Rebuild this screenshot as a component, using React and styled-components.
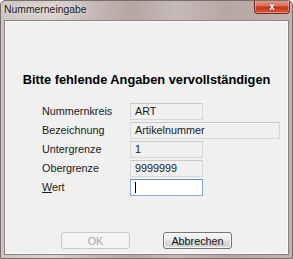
import React from 'react';
import styled, { createGlobalStyle } from 'styled-components';

const Global = createGlobalStyle`
	html, body {
		margin: 0;
		padding: 0;
		background: #ffffff;
	}
	* {
		box-sizing: border-box;
	}
`;

const Window = styled.div`
	width: 293px;
	height: 259px;
	display: flex;
	flex-direction: column;
	padding: 0 3px 3px 3px;
	border: 1px solid #7a6e6c;
	border-radius: 5px 5px 0 0;
	background: linear-gradient(
		90deg,
		#cdc5c3 0%,
		#d8d2d1 18%,
		#c4b8b5 32%,
		#b5a6a2 45%,
		#c6bab7 60%,
		#b7a7a3 78%,
		#c0b2ae 100%
	);
	font-family: 'Liberation Sans', Arial, sans-serif;
	overflow: hidden;
`;

const TitleBar = styled.div`
	height: 19px;
	display: flex;
	justify-content: space-between;
	align-items: flex-start;
`;

const Title = styled.div`
	font-size: 10.4px;
	line-height: 17px;
	color: #1e1a1a;
	text-shadow: 0 0 6px rgba(255, 255, 255, 0.9);
`;

const CloseButton = styled.div`
	width: 36px;
	height: 14px;
	margin-top: -1px;
	margin-right: -1px;
	display: flex;
	align-items: center;
	justify-content: center;
	border: 1px solid #6c2a22;
	border-top: none;
	border-radius: 0 0 4px 4px;
	background: linear-gradient(180deg, #e7a191 0%, #d86a52 45%, #c4341a 55%, #d65a3c 100%);
	box-shadow: inset 0 0 0 1px rgba(255, 200, 190, 0.5);
	color: #ffffff;
	font-size: 10px;
	font-weight: bold;
	line-height: 12px;
	text-shadow: 0 0 2px #5a1a10;
`;

const Client = styled.div`
	flex: 1;
	display: flex;
	flex-direction: column;
	background: #f0f0f0;
	border: 1px solid #8c807e;
	box-shadow: inset 0 0 0 1px #fbfbfb;
`;

const Heading = styled.div`
	margin-top: 51px;
	text-align: center;
	font-size: 12.8px;
	font-weight: bold;
	line-height: 16px;
	color: #000000;
`;

const Form = styled.div`
	margin-top: 15px;
	padding-left: 37px;
	display: grid;
	grid-template-columns: 88px auto;
	grid-auto-rows: 17px;
	row-gap: 2px;
	align-items: center;
`;

const Label = styled.div`
	font-size: 10.8px;
	color: #1a1a1a;
	line-height: 17px;

	u {
		text-decoration: underline;
	}
`;

const Field = styled.div`
	width: ${(p) => p.$width}px;
	height: 17px;
	padding-left: 4px;
	font-size: 10.8px;
	line-height: 15px;
	color: #1a1a1a;
	background: ${(p) => (p.$editable ? '#ffffff' : '#f0f0f0')};
	border: 1px solid ${(p) => (p.$editable ? '#7fa9d6' : '#d8d8d8')};
	border-top-color: ${(p) => (p.$editable ? '#5d8fc4' : '#c9c9c9')};
	display: flex;
	align-items: center;
`;

const Caret = styled.span`
	display: block;
	width: 1px;
	height: 11px;
	background: #000000;
`;

const ButtonRow = styled.div`
	margin-top: 36px;
	display: flex;
	justify-content: center;
	gap: 33px;
`;

const Button = styled.div`
	width: 69px;
	height: 17px;
	display: flex;
	align-items: center;
	justify-content: center;
	font-size: 10.8px;
	border-radius: 3px;
	color: ${(p) => (p.$disabled ? '#a3a3a3' : '#111111')};
	border: 1px solid ${(p) => (p.$disabled ? '#c6c8ca' : '#747474')};
	background: ${(p) =>
		p.$disabled
			? '#f4f4f4'
			: 'linear-gradient(180deg, #f4f4f4 0%, #ececec 48%, #dcdcdc 52%, #d2d2d2 100%)'};
	box-shadow: ${(p) => (p.$disabled ? 'none' : 'inset 0 0 0 1px #fafafa')};
`;

const rows = [
	{ label: 'Nummernkreis', value: 'ART', width: 73 },
	{ label: 'Bezeichnung', value: 'Artikelnummer', width: 150 },
	{ label: 'Untergrenze', value: '1', width: 73 },
	{ label: 'Obergrenze', value: '9999999', width: 73 },
];

export default function App() {
	return (
		<>
			<Global />
			<Window>
				<TitleBar>
					<Title>Nummerneingabe</Title>
					<CloseButton>x</CloseButton>
				</TitleBar>
				<Client>
					<Heading>Bitte fehlende Angaben vervollständigen</Heading>
					<Form>
						{rows.map((r) => (
							<React.Fragment key={r.label}>
								<Label>{r.label}</Label>
								<Field $width={r.width}>{r.value}</Field>
							</React.Fragment>
						))}
						<Label>
							<u>W</u>ert
						</Label>
						<Field $width={73} $editable>
							<Caret />
						</Field>
					</Form>
					<ButtonRow>
						<Button $disabled>OK</Button>
						<Button>Abbrechen</Button>
					</ButtonRow>
				</Client>
			</Window>
		</>
	);
}
